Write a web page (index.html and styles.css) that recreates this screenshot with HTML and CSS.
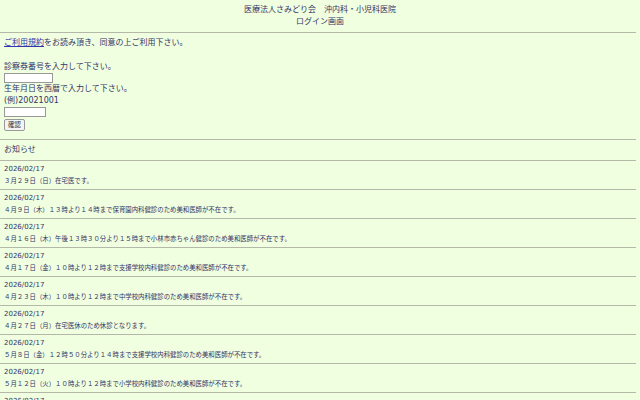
FILE: index.html
```html
<!DOCTYPE html>
<html>
<head>
    <meta charset="utf-8">
    <title>ログイン画面</title>
    <link rel="stylesheet" href="styles.css">
</head>
<body>
    <div class="header">
        <div>医療法人さみどり会　沖内科・小児科医院</div>
        <div>ログイン画面</div>
    </div>
    <hr>
    <div class="login">
        <p><a href="#">ご利用規約</a>をお読み頂き、同意の上ご利用下さい。</p>
        <p class="blank">&nbsp;</p>
        <label for="cardNo">診察券番号を入力して下さい。</label>
        <input type="text" id="cardNo" class="card-input">
        <label for="birth">生年月日を西暦で入力して下さい。</label>
        <div>(例)20021001</div>
        <input type="text" id="birth" class="birth-input">
        <button>確認</button>
    </div>
    <hr>
    <div class="news-title">お知らせ</div>
    <hr>
    <div class="news">
        <div class="item">
            <div class="date">2026/02/17</div>
            <div class="body">３月２９日（日）在宅医です。</div>
        </div>
        <hr>
        <div class="item">
            <div class="date">2026/02/17</div>
            <div class="body">４月９日（木）１３時より１４時まで保育園内科健診のため美和医師が不在です。</div>
        </div>
        <hr>
        <div class="item">
            <div class="date">2026/02/17</div>
            <div class="body">４月１６日（木）午後１３時３０分より１５時まで小林市赤ちゃん健診のため美和医師が不在です。</div>
        </div>
        <hr>
        <div class="item">
            <div class="date">2026/02/17</div>
            <div class="body">４月１７日（金）１０時より１２時まで支援学校内科健診のため美和医師が不在です。</div>
        </div>
        <hr>
        <div class="item">
            <div class="date">2026/02/17</div>
            <div class="body">４月２３日（木）１０時より１２時まで中学校内科健診のため美和医師が不在です。</div>
        </div>
        <hr>
        <div class="item">
            <div class="date">2026/02/17</div>
            <div class="body">４月２７日（月）在宅医休のため休診となります。</div>
        </div>
        <hr>
        <div class="item">
            <div class="date">2026/02/17</div>
            <div class="body">５月８日（金）１２時５０分より１４時まで支援学校内科健診のため美和医師が不在です。</div>
        </div>
        <hr>
        <div class="item">
            <div class="date">2026/02/17</div>
            <div class="body">５月１２日（火）１０時より１２時まで小学校内科健診のため美和医師が不在です。</div>
        </div>
        <hr>
        <div class="item">
            <div class="date">2026/02/17</div>
            <div class="body">５月１４日（木）在宅医です。</div>
        </div>
    </div>
</body>
</html>
```

FILE: styles.css
```css
body {
    margin: 0;
    padding: 0;
    background-color: #f0ffe0;
    color: #333366;
    font-family: "DejaVu Sans", "Noto Sans CJK JP", sans-serif;
    font-size: 8px;
    line-height: 12px;
}

hr {
    margin: 0 4px 0 0;
    height: 0;
    border: 0;
    border-top: 1px solid #b4b8a8;
}

.header {
    text-align: center;
    padding: 4px 0 4px;
}

.login {
    padding: 4px 4px 8px;
}

.login p {
    margin: 0;
}

.login a {
    color: #3333aa;
}

.login label {
    display: block;
}

.card-input, .birth-input {
    display: block;
    box-sizing: border-box;
    height: 10px;
    margin: 0;
    padding: 0;
    border: 1px solid #999;
    background-color: #fff;
}

.card-input {
    width: 49px;
}

.birth-input {
    width: 42px;
}

button {
    display: block;
    margin-top: 2px;
    width: 21px;
    height: 12px;
    padding: 0;
    font-family: "Noto Sans CJK JP", sans-serif;
    font-size: 6.4px;
    line-height: 10px;
    color: #333;
    background-color: #f4f4f4;
    border: 1px solid #999;
    border-radius: 2px;
}

.news-title {
    padding: 4px 4px 4px;
}

.item {
    padding: 3px 4px 3px;
}

.date {
    font-size: 7px;
    line-height: 11px;
}

.body {
    font-family: "Noto Sans CJK JP", sans-serif;
    font-size: 6.4px;
    line-height: 11px;
}
```
